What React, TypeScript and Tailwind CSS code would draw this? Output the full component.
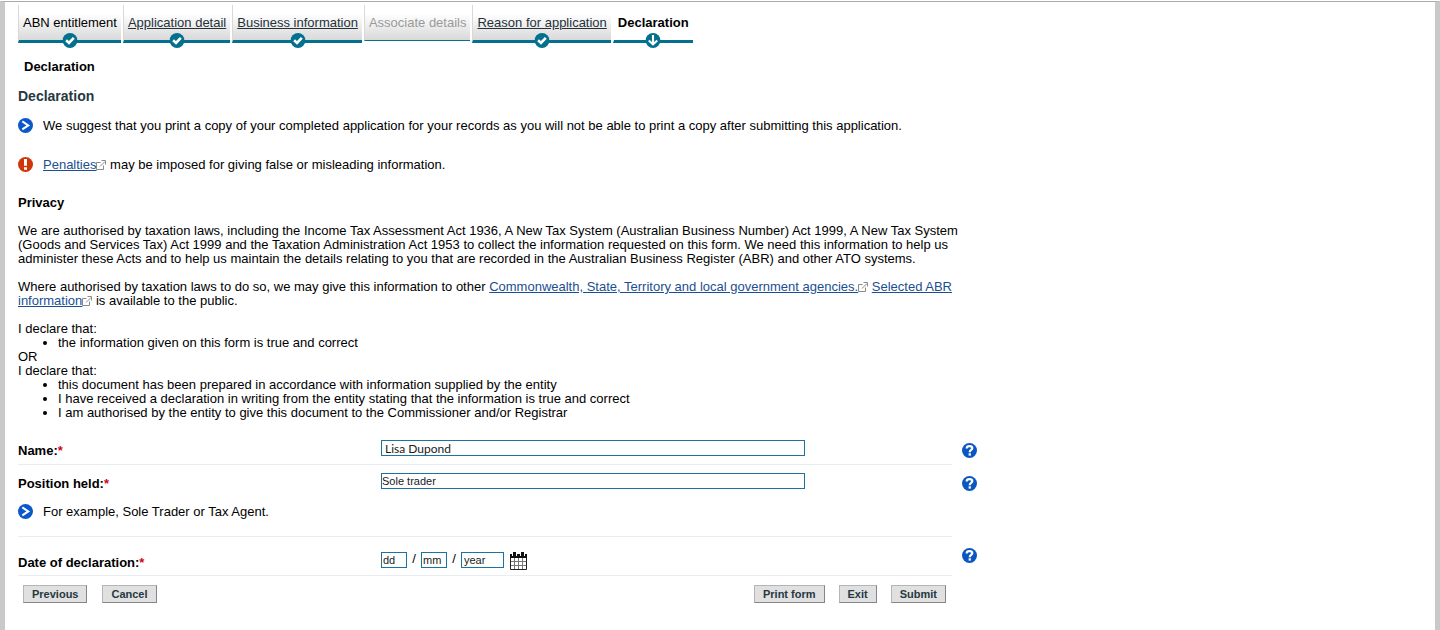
import React from 'react';
import { clsx } from 'clsx';

type TabStatus = 'done' | 'disabled' | 'current';

interface Tab {
  label: string;
  status: TabStatus;
  plain?: boolean;
}

const TABS: Tab[] = [
  { label: 'ABN entitlement', status: 'done', plain: true },
  { label: 'Application detail', status: 'done' },
  { label: 'Business information', status: 'done' },
  { label: 'Associate details', status: 'disabled' },
  { label: 'Reason for application', status: 'done' },
  { label: 'Declaration', status: 'current' },
];

const INPUT = 'block h-4 border border-[#1b74a0] bg-white text-[#1a1a1a] outline-none';

function StatusIcon({ status }: { status: TabStatus }) {
  return (
    <svg viewBox="0 0 15 15" className="absolute -bottom-[8px] left-1/2 size-[15px] -translate-x-1/2" aria-hidden="true">
      <circle cx="7.5" cy="7.5" r="7.5" fill="#04708f" />
      {status === 'done' ? (
        <path d="M3.6 7.3 6.5 10l4.8-5.2" fill="none" stroke="#fff" strokeWidth="2.6" />
      ) : (
        <path d="M7.5 2v9M3.3 7.4l4.2 4 4.2-4" fill="none" stroke="#fff" strokeWidth="2.1" />
      )}
    </svg>
  );
}

function InfoIcon() {
  return (
    <svg viewBox="0 0 15 15" className="size-[15px] shrink-0" aria-hidden="true">
      <circle cx="7.5" cy="7.5" r="7.5" fill="#0b57cc" />
      <path d="m4.3 3.4 6 4-6 4" fill="none" stroke="#fff" strokeWidth="2" />
    </svg>
  );
}

function WarningIcon() {
  return (
    <svg viewBox="0 0 15 15" className="size-[15px] shrink-0" aria-hidden="true">
      <circle cx="7.5" cy="7.5" r="7.5" fill="#cf3708" />
      <path d="M6 2h3v6.7H6zM6 10.2h3v2.6H6z" fill="#fff" />
    </svg>
  );
}

function HelpButton({ label }: { label: string }) {
  return (
    <button type="button" aria-label={label} className="block size-[15px] cursor-pointer">
      <svg viewBox="0 0 15 15" className="size-[15px]" aria-hidden="true">
        <circle cx="7.5" cy="7.5" r="7.5" fill="#0b57c2" />
        <path
          d="M4.7 5.5c0-1.5 1.2-2.3 2.8-2.3s2.8.8 2.8 2.1c0 1.7-2.6 1.7-2.6 3.9"
          fill="none"
          stroke="#fff"
          strokeWidth="2.2"
        />
        <path d="M6.6 10.3h2.3v2.3H6.6z" fill="#fff" />
      </svg>
    </button>
  );
}

function CalendarIcon() {
  return (
    <svg viewBox="0 0 17 18" className="h-[18px] w-[17px]" aria-hidden="true">
      <path d="M.5 3v14.5h16V3z" fill="#fff" stroke="#222" />
      <path d="M0 2h17v4H0z" fill="#111" />
      <path d="M2 1h1v3H2zM6 1h1v3H6zM10 1h1v3h-1zM14 1h1v3h-1z" fill="#fff" />
      <path d="M3 0h3v5H3zM11 0h3v5h-3z" fill="#111" />
      <path d="M4.5 6v11M8.5 6v11M12.5 6v11M1 9.5h15M1 13.5h15" stroke="#777" />
    </svg>
  );
}

function ExternalLink({ children }: { children: React.ReactNode }) {
  return (
    <a href="#" className="text-[#1b4f91]">
      <span className="underline">{children}</span>
      <svg viewBox="0 0 10 10" className="inline size-[10px] align-[-1px]" fill="none" stroke="#8a8a8a" aria-hidden="true">
        <path d="M4.5 2.5h-4v7h7v-4M4 6.5l5-5M5.5.5h4v4" />
      </svg>
    </a>
  );
}

function FormButton({ children }: { children: React.ReactNode }) {
  return (
    <button
      type="button"
      className="h-[18px] cursor-pointer border border-t-[#b5b5b5] border-r-[#858585] border-b-[#858585] border-l-[#b5b5b5] bg-[#e0e0e0] px-2 text-[11px] leading-4 font-bold text-[#26383f]"
    >
      {children}
    </button>
  );
}

interface FieldRowProps {
  label: string;
  htmlFor: string;
  rowClass: string;
  helpClass: string;
  note?: string;
  children: React.ReactNode;
}

function FieldRow({ label, htmlFor, rowClass, helpClass, note, children }: FieldRowProps) {
  return (
    <div className="flex gap-[10px]">
      <div className={clsx('flex-1 border-b border-[#e8eef2]', rowClass)}>
        <div className="flex items-start">
          <label htmlFor={htmlFor} className="mt-1 w-[363px] font-bold">
            {label}
            <span className="text-[#d4001a]">*</span>
          </label>
          {children}
        </div>
        {note && (
          <p className="mt-[13px] flex items-center gap-[10px]">
            <InfoIcon />
            {note}
          </p>
        )}
      </div>
      <div className={helpClass}>
        <HelpButton label={`Help: ${label}`} />
      </div>
    </div>
  );
}

export default function App() {
  return (
    <div className="min-h-screen bg-white pt-px font-['Liberation_Sans',Arial,sans-serif] text-[13px] leading-[14px] text-black">
      <div className="min-h-[calc(100vh-1px)] border-x-[5px] border-t border-x-[#c9c9c9] border-t-[#ababab] pt-[3px] pl-[13px]">
        {/* Progress tabs */}
        <nav className="flex items-start gap-[2px]">
          {TABS.map(({ label, status, plain }) => (
            <a
              key={label}
              href="#"
              aria-disabled={status === 'disabled'}
              aria-current={status === 'current' ? 'step' : undefined}
              className={clsx(
                'relative border-l px-1 pt-[11px] whitespace-nowrap',
                status === 'current'
                  ? 'h-[38px] border-b-[3px] border-b-[#04708f] border-l-white font-bold'
                  : 'border-l-[#d8d8d8] bg-linear-to-b from-white from-25% to-[#d9d9d9]',
                status === 'done' && 'h-[38px] border-b-[3px] border-b-[#04708f]',
                status === 'done' && !plain && 'text-[#26323a] underline',
                status === 'disabled' && 'h-9 border-b border-b-[#04708f] text-[#9a9a9a]'
              )}
            >
              {label}
              {status !== 'disabled' && <StatusIcon status={status} />}
            </a>
          ))}
        </nav>

        <main className="max-w-[959px]">
          <h1 className="mt-[17px] ml-[6px] font-bold">Declaration</h1>
          <h2 className="mt-[14px] text-sm leading-4 font-bold text-[#26383f]">Declaration</h2>

          <p className="mt-[14px] flex items-center gap-[10px]">
            <InfoIcon />
            We suggest that you print a copy of your completed application for your records as you will not be able to
            print a copy after submitting this application.
          </p>
          <div className="mt-6 flex items-center gap-[10px]">
            <WarningIcon />
            <p>
              <ExternalLink>Penalties</ExternalLink> may be imposed for giving false or misleading information.
            </p>
          </div>

          {/* Privacy statement */}
          <section className="max-w-[956px]">
            <h3 className="mt-6 font-bold">Privacy</h3>
            <p className="mt-[14px]">
              We are authorised by taxation laws, including the Income Tax Assessment Act 1936, A New Tax System
              (Australian Business Number) Act 1999, A New Tax System (Goods and Services Tax) Act 1999 and the Taxation
              Administration Act 1953 to collect the information requested on this form. We need this information to
              help us administer these Acts and to help us maintain the details relating to you that are recorded in the
              Australian Business Register (ABR) and other ATO systems.
            </p>
            <p className="mt-[14px]">
              Where authorised by taxation laws to do so, we may give this information to other{' '}
              <ExternalLink>Commonwealth, State, Territory and local government agencies.</ExternalLink>{' '}
              <ExternalLink>Selected ABR information</ExternalLink> is available to the public.
            </p>
            <p className="mt-[14px]">I declare that:</p>
            <ul className="list-disc pl-10">
              <li>the information given on this form is true and correct</li>
            </ul>
            <p>OR</p>
            <p>I declare that:</p>
            <ul className="list-disc pl-10">
              <li>this document has been prepared in accordance with information supplied by the entity</li>
              <li>I have received a declaration in writing from the entity stating that the information is true and correct</li>
              <li>I am authorised by the entity to give this document to the Commissioner and/or Registrar</li>
            </ul>
          </section>

          <form onSubmit={(e) => e.preventDefault()}>
            <FieldRow label="Name:" htmlFor="name" rowClass="pt-5 pb-[6px]" helpClass="pt-[23px]">
              <input
                id="name"
                defaultValue="Lisa Dupond"
                className={clsx(INPUT, 'w-[424px] px-[3px] font-[Lato,sans-serif] text-xs leading-[14px]')}
              />
            </FieldRow>
            <FieldRow
              label="Position held:"
              htmlFor="position"
              rowClass="pt-2 pb-[17px]"
              helpClass="pt-[11px]"
              note="For example, Sole Trader or Tax Agent."
            >
              <input
                id="position"
                defaultValue="Sole trader"
                className={clsx(INPUT, 'w-[424px] text-[11px] leading-[14px]')}
              />
            </FieldRow>
            <FieldRow label="Date of declaration:" htmlFor="day" rowClass="pt-[15px] pb-[5px]" helpClass="pt-[11px]">
              <div className="flex items-start text-[11px] leading-[14px]">
                <input id="day" aria-label="Day" defaultValue="dd" className={clsx(INPUT, 'w-[26px] px-px')} />
                <span className="w-[14px] text-center text-[13px] leading-[14px]">/</span>
                <input aria-label="Month" defaultValue="mm" className={clsx(INPUT, 'w-[26px] px-px')} />
                <span className="w-[14px] text-center text-[13px] leading-[14px]">/</span>
                <input aria-label="Year" defaultValue="year" className={clsx(INPUT, 'w-[43px] px-[2px]')} />
                <button type="button" aria-label="Choose a date" className="ml-[6px] cursor-pointer">
                  <CalendarIcon />
                </button>
              </div>
            </FieldRow>

            <div className="mt-[9px] flex justify-between pr-[31px] pl-[5px]">
              <div className="flex gap-[15px]">
                <FormButton>Previous</FormButton>
                <FormButton>Cancel</FormButton>
              </div>
              <div className="flex gap-[14px]">
                <FormButton>Print form</FormButton>
                <FormButton>Exit</FormButton>
                <FormButton>Submit</FormButton>
              </div>
            </div>
          </form>
        </main>
      </div>
    </div>
  );
}
